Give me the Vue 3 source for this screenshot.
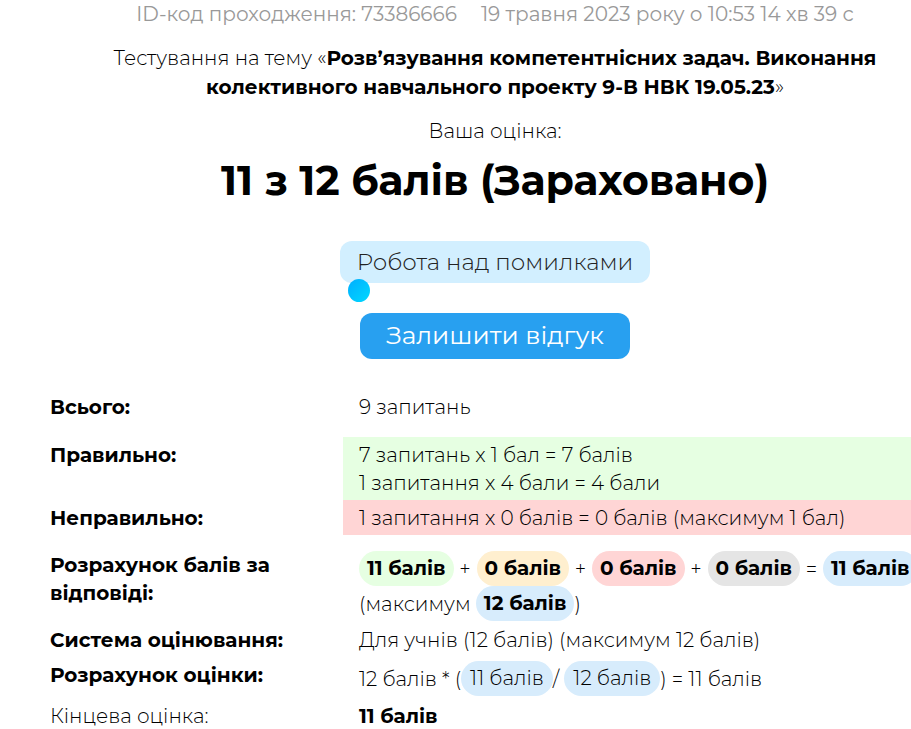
<script setup>
const scores = [
  { tone: 'green', value: '11 балів', sign: '+' },
  { tone: 'yellow', value: '0 балів', sign: '+' },
  { tone: 'red', value: '0 балів', sign: '+' },
  { tone: 'gray', value: '0 балів', sign: '=' },
  { tone: 'blue', value: '11 балів', sign: '' },
]
</script>

<template>
  <main class="page">
    <header class="summary">
      <p class="meta"><span>ID-код проходження: 73386666</span><span>19 травня 2023 року о 10:53 14 хв 39 с</span></p>
      <p class="topic">
        Тестування на тему «<strong>Розв’язування компетентнісних задач. Виконання<br />колективного навчального проекту 9-В НВК 19.05.23</strong>»
      </p>
      <p class="caption">Ваша оцінка:</p>
      <h1>11 з 12 балів (Зараховано)</h1>
      <div class="actions">
        <a class="review" href="#">Робота над помилками<span class="dot"></span></a>
        <button class="feedback" type="button">Залишити відгук</button>
      </div>
    </header>

    <dl class="results">
      <div class="row spaced">
        <dt>Всього:</dt>
        <dd>9 запитань</dd>
      </div>
      <div class="row">
        <dt>Правильно:</dt>
        <dd class="green">7 запитань x 1 бал = 7 балів<br />1 запитання x 4 бали = 4 бали</dd>
      </div>
      <div class="row spaced">
        <dt>Неправильно:</dt>
        <dd class="red">1 запитання x 0 балів = 0 балів (максимум 1 бал)</dd>
      </div>
      <div class="row scores">
        <dt>Розрахунок балів за<br />відповіді:</dt>
        <dd>
          <div class="line">
            <template v-for="(s, i) in scores" :key="i">
              <b class="pill" :class="s.tone">{{ s.value }}</b>
              <span v-if="s.sign" class="sign">{{ s.sign }}</span>
            </template>
          </div>
          <div class="line">(максимум&nbsp;<b class="pill blue">12 балів</b>)</div>
        </dd>
      </div>
      <div class="row">
        <dt>Система оцінювання:</dt>
        <dd>Для учнів (12 балів) (максимум 12 балів)</dd>
      </div>
      <div class="row formula">
        <dt>Розрахунок оцінки:</dt>
        <dd>
          <div class="line">12 балів * (<span class="pill blue">11 балів</span>/&nbsp;<span class="pill blue">12 балів</span>) = 11 балів</div>
        </dd>
      </div>
      <div class="row">
        <dt class="light">Кінцева оцінка:</dt>
        <dd><b>11 балів</b></dd>
      </div>
    </dl>
  </main>
</template>

<style>
body {
  margin: 0;
  background: #fff;
  overflow-x: hidden;
}
</style>

<style scoped>
.page {
  font-family: Montserrat, Inter, sans-serif;
  font-size: 20px;
  font-weight: 300;
  line-height: 28px;
  color: #000;
  overflow: hidden;
}
p,
h1,
dl,
dd {
  margin: 0;
}
strong,
b,
dt {
  font-weight: 700;
}
.summary {
  width: calc(100% - 21px);
  margin-left: 50px;
  text-align: center;
  white-space: nowrap;
}
.meta {
  display: flex;
  justify-content: center;
  gap: 24px;
  color: #999;
  font-weight: 400;
}
.topic {
  margin-top: 16px;
  line-height: 29px;
}
.caption {
  margin-top: 15px;
}
h1 {
  margin-top: 7px;
  font-size: 41px;
  line-height: 56px;
  font-weight: 700;
}
.actions {
  display: flex;
  flex-direction: column;
  align-items: center;
  gap: 30px;
  margin-top: 33px;
}
.review,
.feedback {
  box-sizing: border-box;
  display: flex;
  align-items: center;
  justify-content: center;
  border: 0;
  border-radius: 12px;
  font: inherit;
}
.review {
  position: relative;
  width: 310px;
  height: 42px;
  background: #d2efff;
  color: #222;
  font-size: 23px;
  text-decoration: none;
}
.dot {
  position: absolute;
  left: 8px;
  top: 38px;
  width: 22px;
  height: 23px;
  border-radius: 50%;
  background: linear-gradient(135deg, #00aeff, #00d9ff);
}
.feedback {
  width: 270px;
  height: 46px;
  padding: 0 0 2px;
  background: #28a0f0;
  color: #fff;
  font-size: 25px;
  font-weight: 400;
  cursor: pointer;
}
.results {
  width: calc(100% + 16px);
  margin-left: 34px;
  margin-top: 30px;
}
.row {
  display: grid;
  grid-template-columns: 1fr 2fr;
}
.spaced {
  margin-bottom: 13px;
}
dt,
dd {
  padding: 4px 16px 3px;
  white-space: nowrap;
}
.scores dt,
.scores dd {
  padding-top: 3px;
  padding-bottom: 1px;
}
.formula dd {
  padding-bottom: 2px;
}
.light {
  font-weight: 300;
}
.line {
  display: flex;
  align-items: center;
}
.pill {
  padding: 3px 8px 4px;
  border-radius: 18px;
}
.formula .pill {
  padding-left: 9px;
  padding-right: 9px;
}
.sign {
  width: 23px;
  text-align: center;
}
.green {
  background: #e6ffe2;
}
.yellow {
  background: #ffefcf;
}
.red {
  background: #ffd5d5;
}
.gray {
  background: #e5e5e5;
}
.blue {
  background: #d7ecfc;
}
</style>
